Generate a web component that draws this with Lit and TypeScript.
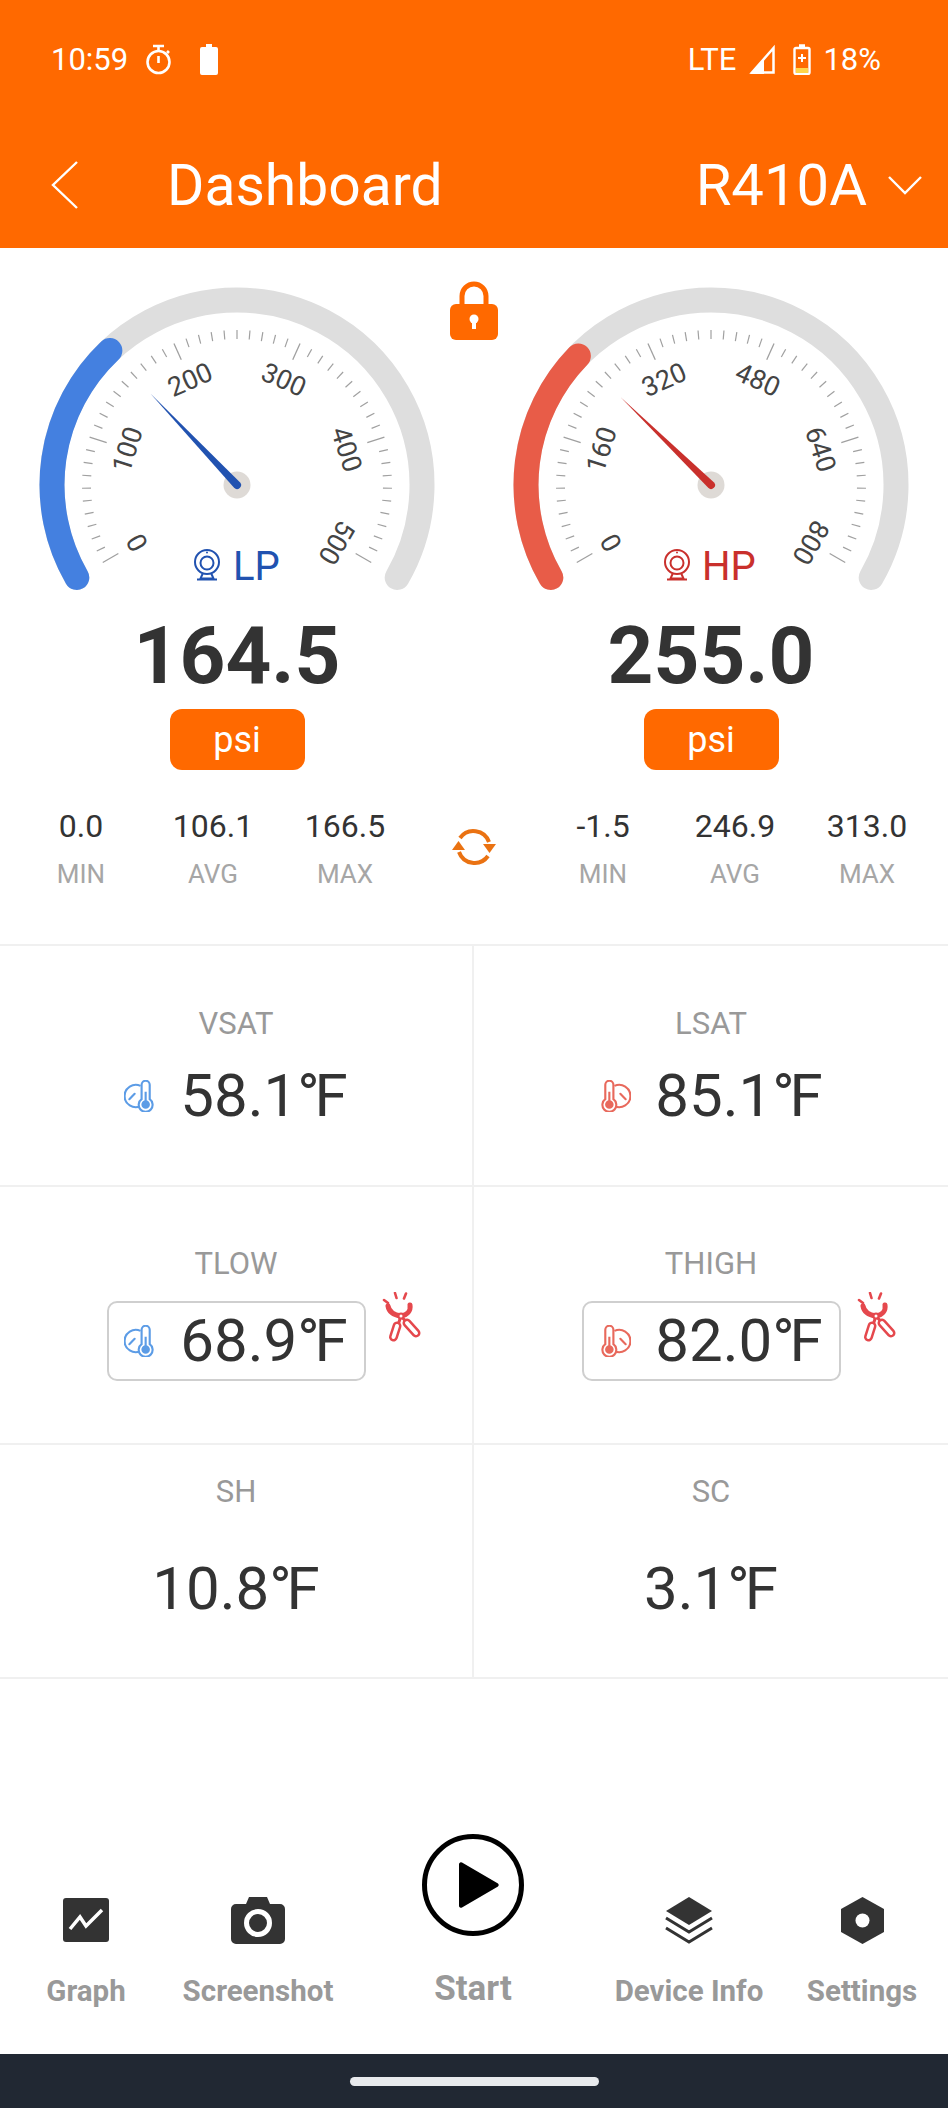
import { LitElement, css, html, svg } from "lit";
import { customElement, property } from "lit/decorators.js";

const CX = 237;
const CY = 237;

// fraction of the 240 degree sweep -> point on the dial
function pt(f: number, r: number) {
  const a = ((210 - 240 * f) * Math.PI) / 180;
  return [CX + r * Math.cos(a), CY - r * Math.sin(a)];
}

function arc(from: number, to: number, r: number) {
  const [x1, y1] = pt(from, r);
  const [x2, y2] = pt(to, r);
  const large = (to - from) * 240 > 180 ? 1 : 0;
  return `M${x1} ${y1}A${r} ${r} 0 ${large} 1 ${x2} ${y2}`;
}

@customElement("pt-gauge")
class PtGauge extends LitElement {
  static styles = css`
    :host {
      display: block;
    }
    svg {
      display: block;
    }
    .track {
      fill: none;
      stroke: #dedede;
      stroke-width: 25;
      stroke-linecap: round;
    }
    .level {
      fill: none;
      stroke-width: 25;
      stroke-linecap: round;
    }
    .minor {
      stroke: #a0a0a0;
      stroke-width: 1.2;
    }
    .major {
      stroke: #a0a0a0;
      stroke-width: 1.3;
    }
    .num {
      font: 27px Roboto, sans-serif;
      fill: #444;
      text-anchor: middle;
      dominant-baseline: central;
    }
    .tag {
      font: 40px Roboto, sans-serif;
    }
  `;

  @property({ type: Number }) value = 0;
  @property({ type: Number }) max = 500;
  @property() name = "";
  @property() color = "";
  @property() dark = "";

  render() {
    const f = (this.value / this.max) * 0.97;
    const ticks = [];
    for (let i = 0; i <= 50; i++) {
      const major = i % 10 === 0;
      const [x1, y1] = pt(i / 50, major ? 137 : 146);
      const [x2, y2] = pt(i / 50, 155);
      ticks.push(svg`<line class=${major ? "major" : "minor"} x1=${x1} y1=${y1} x2=${x2} y2=${y2}></line>`);
    }
    const nums = [0, 1, 2, 3, 4, 5].map((n) => {
      const [x, y] = pt(n / 5, 115);
      const rot = -120 + n * 48;
      return svg`<text class="num" x=${x} y=${y} transform="rotate(${rot} ${x} ${y})">${(this.max / 5) * n}</text>`;
    });
    const [tx, ty] = pt(f, 126);
    const [bx, by] = pt(f, 0);
    const nx = (ty - by) / 126;
    const ny = -(tx - bx) / 126;
    const needle = `M${tx} ${ty}L${CX + nx * 4} ${CY + ny * 4}A4 4 0 0 0 ${CX - nx * 4} ${CY - ny * 4}Z`;
    const lp = this.name === "LP";

    return html`
      <svg width="474" height="352" viewBox="0 0 474 352">
        <path class="track" d=${arc(0, 1, 185)}></path>
        <path class="level" stroke=${this.color} d=${arc(0, f, 185)}></path>
        ${ticks} ${nums}
        <circle cx=${CX} cy=${CY} r="13.5" fill="#dedad6"></circle>
        <path d=${needle} fill=${this.dark}></path>
        <g transform="translate(${lp ? 194 : 190} 301)" fill="none" stroke=${this.dark} stroke-width="2">
          <circle cx="13" cy="13" r="12"></circle>
          <circle cx="13" cy="14" r="6.5"></circle>
          <circle cx="13" cy="3.6" r="1" fill=${this.dark} stroke="none"></circle>
          <path d="M9 24l-2.500 5.500h13L17 24M3 30.500h20"></path>
        </g>
        <text class="tag" x=${lp ? 233 : 228} y="332" fill=${this.dark}>${this.name}</text>
      </svg>
    `;
  }
}

// same drawing for both, the hot one is mirrored
function thermo(color: string, flip: boolean) {
  return html`<svg width="32" height="32" viewBox="0 0 30 30" fill="none" stroke=${color} stroke-width="2">
    <g transform=${flip ? "translate(30 0) scale(-1 1)" : ""}>
      <path d="M15.500 5.500A10.500 10.500 0 1 0 15.500 24.500"></path>
      <path d="M5 18l5-5" stroke-linecap="round"></path>
      <path d="M16.500 18V4.500a3.800 3.800 0 0 1 7.600 0V18a6.500 6.500 0 1 1-7.600 0z" fill="#fff"></path>
      <circle cx="20.300" cy="23" r="3" fill=${color}></circle>
      <path d="M20.300 22V11"></path>
    </g>
  </svg>`;
}

const thermoCold = thermo("#5c9ce6", false);
const thermoHot = thermo("#e8695c", true);

const pliers = html`<svg class="pliers" width="40" height="52" viewBox="0 0 40 52" fill="none" stroke="#e5484d">
  <path d="M2 8l4 3M13 1l1.500 5M24 1.500l-2 5" stroke-width="2.600" stroke-linecap="round"></path>
  <path d="M6 14c1 6 6 9 13 10 6-1 10-5 9-11" stroke-width="5" stroke-linecap="round"></path>
  <path d="M19 24L34 41M19 24L12 45" stroke-width="3"></path>
  <path d="M25 31L34 41" stroke-width="9" stroke-linecap="round"></path>
  <path d="M25 31L34 41" stroke="#fff" stroke-width="4" stroke-linecap="round"></path>
  <path d="M15 34L11.500 45" stroke-width="9" stroke-linecap="round"></path>
  <path d="M15 34L11.500 45" stroke="#fff" stroke-width="4" stroke-linecap="round"></path>
  <circle cx="19" cy="24" r="2.500" fill="#fff" stroke-width="2"></circle>
</svg>`;

@customElement("app-root")
export class AppRoot extends LitElement {
  static styles = css`
    :host {
      display: flex;
      flex-direction: column;
      height: 2108px;
      background: #fff;
      font-family: Roboto, sans-serif;
      color: #333;
      position: relative;
    }
    .appbar {
      height: 248px;
      box-sizing: border-box;
      background: #ff6900;
      color: #fff;
    }
    .status {
      height: 118px;
      padding: 0 67px 0 51px;
      display: flex;
      align-items: center;
      font-size: 31px;
    }
    .status .grow {
      flex: 1;
    }
    .timer {
      margin-left: 17px;
    }
    .cell-icon {
      margin-left: 28px;
    }
    .tri {
      margin-left: 12px;
    }
    .batt {
      margin-left: 17px;
    }
    .pct {
      margin-left: 12px;
    }
    .titlebar {
      display: flex;
      align-items: center;
      height: 72px;
      margin-top: 31px;
      padding: 0 26px 0 51px;
    }
    .title {
      font-size: 57px;
      margin-left: 89px;
      flex: 1;
    }
    .unit-name {
      font-size: 58px;
      margin-right: 21px;
    }
    .gauges {
      display: grid;
      grid-template-columns: 474px 474px;
    }
    .gauge-col {
      display: flex;
      flex-direction: column;
      align-items: center;
    }
    .lock {
      position: absolute;
      left: 449px;
      top: 281px;
    }
    .reading {
      font-size: 80px;
      font-weight: 700;
      line-height: 90px;
      margin-top: 11px;
    }
    .psi {
      width: 135px;
      height: 61px;
      margin-top: 8px;
      border-radius: 12px;
      background: #ff6900;
      color: #fff;
      font-size: 36px;
      display: flex;
      align-items: center;
      justify-content: center;
    }
    .stats {
      display: grid;
      grid-template-columns: 132px 132px 132px;
      margin-top: 34px;
      height: 140px;
      text-align: center;
    }
    .stats.left {
      margin-right: 48px;
    }
    .stats.right {
      margin-left: 48px;
    }
    .stat b {
      display: block;
      font-weight: 400;
      font-size: 32px;
      line-height: 44px;
    }
    .stat span {
      display: block;
      font-size: 26px;
      line-height: 36px;
      margin-top: 8px;
      color: #a6a6a6;
    }
    .sync {
      position: absolute;
      left: 452px;
      top: 827px;
    }
    .cells {
      display: grid;
      grid-template-columns: 474px 474px;
      grid-template-rows: 241px 258px 234px;
      border-top: 2px solid #f0f0f0;
    }
    .cell {
      border-bottom: 2px solid #f0f0f0;
      display: flex;
      flex-direction: column;
      align-items: center;
      box-sizing: border-box;
    }
    .cell:nth-child(odd) {
      border-right: 2px solid #f0f0f0;
    }
    .cell-label {
      font-size: 31px;
      color: #999;
      line-height: 36px;
    }
    .cell-value {
      display: flex;
      align-items: center;
      justify-content: center;
      gap: 24px;
      font-size: 60px;
      line-height: 72px;
    }
    .deg {
      letter-spacing: -5px;
    }
    .row1 .cell-label {
      margin-top: 60px;
    }
    .row1 .cell-value {
      margin-top: 18px;
    }
    .row2 .cell-label {
      margin-top: 59px;
    }
    .row2 .cell-wrap {
      position: relative;
      margin-top: 19px;
    }
    .row2 .cell-value {
      width: 259px;
      height: 80px;
      box-sizing: border-box;
      border: 2.500px solid #cfcfcf;
      border-radius: 10px;
    }
    .pliers {
      position: absolute;
      left: 275px;
      top: -9px;
    }
    .row3 .cell-label {
      margin-top: 29px;
    }
    .row3 .cell-value {
      margin-top: 43px;
    }
    .spacer {
      flex: 1;
    }
    .nav {
      display: grid;
      grid-template-columns: 172px 172px 258px 174px 172px;
      height: 220px;
      align-items: end;
      text-align: center;
    }
    .nav-item {
      display: flex;
      flex-direction: column;
      align-items: center;
      font-size: 29.500px;
      font-weight: 700;
      color: #999;
      height: 158px;
    }
    .nav-icon {
      height: 48px;
      display: flex;
      align-items: center;
      margin-bottom: 30px;
    }
    .nav-item.start {
      font-size: 35px;
      height: 220px;
    }
    .start svg {
      display: block;
      margin-bottom: 32px;
    }
    .homebar {
      height: 54px;
      background: #212833;
      display: flex;
      align-items: center;
      justify-content: center;
    }
    .pill {
      width: 249px;
      height: 9px;
      border-radius: 5px;
      background: #e8eaed;
    }
  `;

  private stat(v: string, l: string) {
    return html`<div class="stat"><b>${v}</b><span>${l}</span></div>`;
  }

  private temp(v: string) {
    return html`<span>${v}<span class="deg">°</span>F</span>`;
  }

  render() {
    return html`
      <div class="appbar">
        <div class="status">
          <span>10:59</span>
          <svg class="timer" width="27" height="31" viewBox="0 0 27 31" fill="none" stroke="#fff" stroke-width="2.600">
            <path d="M8 2h11M13.500 2v4M22 7l2 2"></path>
            <circle cx="13.500" cy="18" r="11"></circle>
            <path d="M13.500 12v7"></path>
          </svg>
          <svg class="cell-icon" width="18" height="31" viewBox="0 0 18 31"><path fill="#fff" d="M6 0h6v3h4a2 2 0 0 1 2 2v24a2 2 0 0 1-2 2H2a2 2 0 0 1-2-2V5a2 2 0 0 1 2-2h4z"></path></svg>
          <span class="grow"></span>
          <span>LTE</span>
          <svg class="tri" width="28" height="30" viewBox="0 0 28 30"><path fill="none" stroke="#fff" stroke-width="2.500" d="M25.500 4v24.500H4z"></path><path fill="#fff" d="M2 30L16 15v15z"></path></svg>
          <svg class="batt" width="18" height="31" viewBox="0 0 18 31">
            <path fill="none" stroke="#fff" stroke-width="2.400" d="M3 4h12a1.500 1.500 0 0 1 1.500 1.500v23a1.500 1.500 0 0 1-1.500 1.500H3a1.500 1.500 0 0 1-1.500-1.500v-23A1.500 1.500 0 0 1 3 4zM6 1.500h6"></path>
            <path fill="#fff" d="M8 10h2v3h3v2h-3v3H8v-3H5v-2h3z"></path>
            <path fill="#ffd54a" d="M3 24h12v5H3z"></path>
          </svg>
          <span class="pct">18%</span>
        </div>
        <div class="titlebar">
          <svg width="27" height="48" viewBox="0 0 27 48" fill="none" stroke="#fff" stroke-width="2.400"><path d="M26 1L2 24l24 23"></path></svg>
          <span class="title">Dashboard</span>
          <span class="unit-name">R410A</span>
          <svg width="34" height="20" viewBox="0 0 34 20" fill="none" stroke="#fff" stroke-width="2.400"><path d="M1 2l16 16L33 2"></path></svg>
        </div>
      </div>

      <svg class="lock" width="50" height="60" viewBox="0 0 50 60">
        <path d="M13 24v-9a12 12 0 0 1 24 0v9" fill="none" stroke="#ff6900" stroke-width="5"></path>
        <rect x="1" y="23" width="48" height="36" rx="6" fill="#ff6900"></rect>
        <circle cx="25" cy="38" r="4.500" fill="#fff"></circle>
        <rect x="23" y="38" width="4" height="10" fill="#fff"></rect>
      </svg>

      <div class="gauges">
        <div class="gauge-col">
          <pt-gauge .value=${164.5} .max=${500} name="LP" color="#4480e0" dark="#2152b0"></pt-gauge>
          <div class="reading">164.5</div>
          <div class="psi">psi</div>
          <div class="stats left">
            ${this.stat("0.0", "MIN")}${this.stat("106.1", "AVG")}${this.stat("166.5", "MAX")}
          </div>
        </div>
        <div class="gauge-col">
          <pt-gauge .value=${255} .max=${800} name="HP" color="#e85c48" dark="#c9302c"></pt-gauge>
          <div class="reading">255.0</div>
          <div class="psi">psi</div>
          <div class="stats right">
            ${this.stat("-1.5", "MIN")}${this.stat("246.9", "AVG")}${this.stat("313.0", "MAX")}
          </div>
        </div>
      </div>

      <svg class="sync" width="44" height="40" viewBox="0 0 44 40" fill="none" stroke="#ea7212" stroke-width="4">
        <path d="M8 11A16.500 16.500 0 0 1 37 15"></path>
        <path d="M36 29A16.500 16.500 0 0 1 7 25"></path>
        <path d="M31 17h13l-6.500 9z" fill="#ea7212" stroke="none"></path>
        <path d="M0 23h13L6.500 14z" fill="#ea7212" stroke="none"></path>
      </svg>

      <div class="cells">
        <div class="cell row1">
          <div class="cell-label">VSAT</div>
          <div class="cell-value">${thermoCold}${this.temp("58.1")}</div>
        </div>
        <div class="cell row1">
          <div class="cell-label">LSAT</div>
          <div class="cell-value">${thermoHot}${this.temp("85.1")}</div>
        </div>
        <div class="cell row2">
          <div class="cell-label">TLOW</div>
          <div class="cell-wrap">
            <div class="cell-value">${thermoCold}${this.temp("68.9")}</div>
            ${pliers}
          </div>
        </div>
        <div class="cell row2">
          <div class="cell-label">THIGH</div>
          <div class="cell-wrap">
            <div class="cell-value">${thermoHot}${this.temp("82.0")}</div>
            ${pliers}
          </div>
        </div>
        <div class="cell row3">
          <div class="cell-label">SH</div>
          <div class="cell-value">${this.temp("10.8")}</div>
        </div>
        <div class="cell row3">
          <div class="cell-label">SC</div>
          <div class="cell-value">${this.temp("3.1")}</div>
        </div>
      </div>

      <div class="spacer"></div>

      <div class="nav">
        <div class="nav-item">
          <div class="nav-icon">
            <svg width="46" height="44" viewBox="0 0 46 44">
              <rect width="46" height="44" rx="3" fill="#333"></rect>
              <path d="M7 31l10-12 6 9L39 12" fill="none" stroke="#fff" stroke-width="3.500"></path>
            </svg>
          </div>
          Graph
        </div>
        <div class="nav-item">
          <div class="nav-icon">
            <svg width="54" height="47" viewBox="0 0 54 47">
              <path fill="#333" d="M5 7h10l3-7h18l3 7h10a5 5 0 0 1 5 5v30a5 5 0 0 1-5 5H5a5 5 0 0 1-5-5V12a5 5 0 0 1 5-5z"></path>
              <circle cx="27" cy="26" r="11.500" fill="none" stroke="#fff" stroke-width="5"></circle>
            </svg>
          </div>
          Screenshot
        </div>
        <div class="nav-item start">
          <svg width="102" height="102" viewBox="0 0 102 102">
            <circle cx="51" cy="51" r="48.500" fill="#fff" stroke="#000" stroke-width="5"></circle>
            <path d="M37 30a2 2 0 0 1 3-1.500l36 21a2 2 0 0 1 0 3l-36 21a2 2 0 0 1-3-1.500z" fill="#000"></path>
          </svg>
          Start
        </div>
        <div class="nav-item">
          <div class="nav-icon">
            <svg width="48" height="47" viewBox="0 0 48 47">
              <path fill="#333" d="M24 0l23 14-23 14L1 14z"></path>
              <path fill="none" stroke="#333" stroke-width="3" d="M1 21l23 14 23-14M1 31l23 14 23-14"></path>
            </svg>
          </div>
          Device Info
        </div>
        <div class="nav-item">
          <div class="nav-icon">
            <svg width="43" height="47" viewBox="0 0 43 47">
              <path fill="#333" d="M21.500 0L43 12v23L21.500 47 0 35V12z"></path>
              <circle cx="21.500" cy="23.500" r="7" fill="#fff"></circle>
            </svg>
          </div>
          Settings
        </div>
      </div>

      <div class="homebar"><div class="pill"></div></div>
    `;
  }
}
